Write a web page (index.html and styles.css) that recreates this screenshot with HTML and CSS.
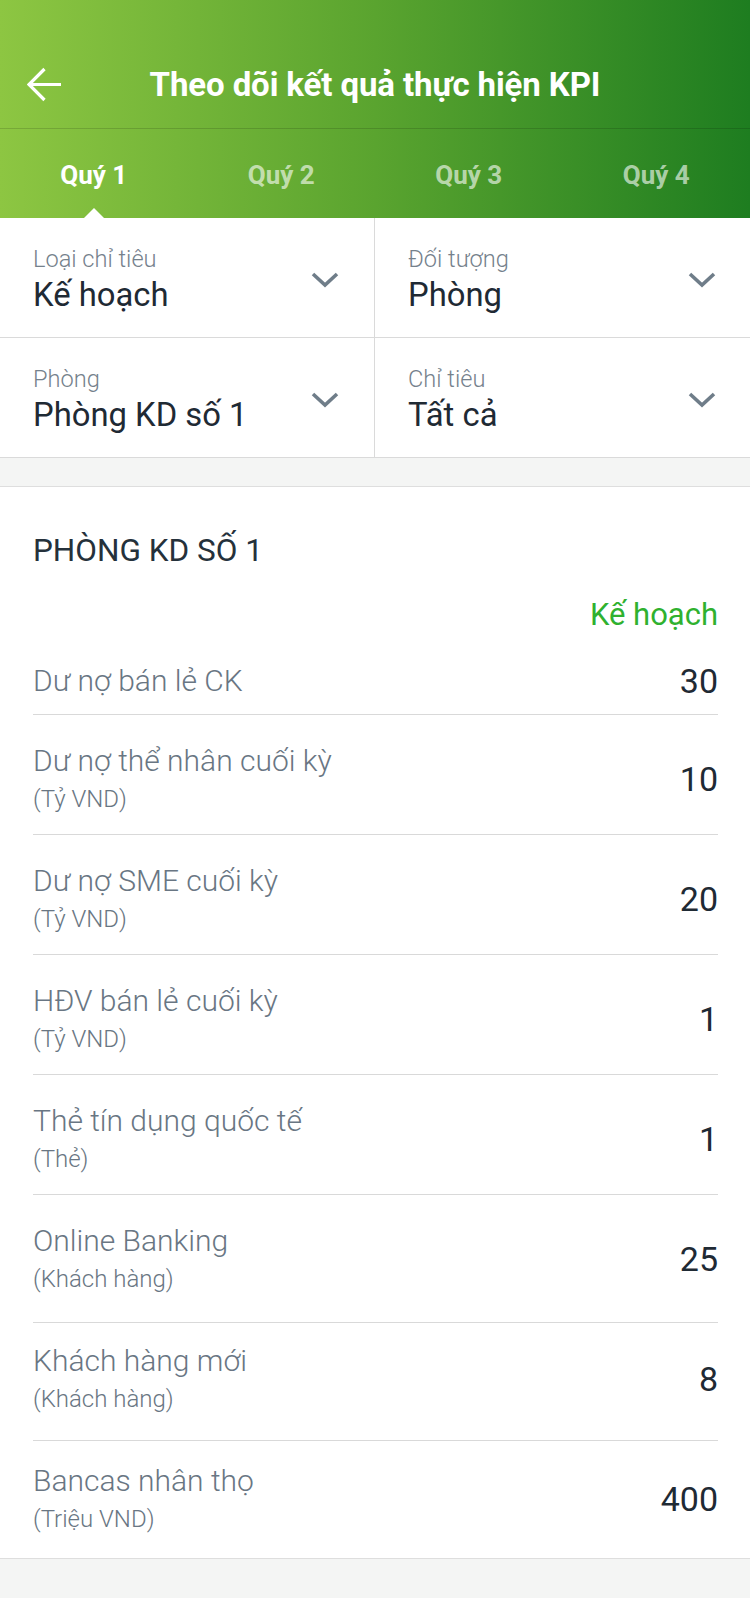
FILE: index.html
```html
<!DOCTYPE html>
<html lang="vi">
<head>
<meta charset="utf-8">
<title>Theo dõi kết quả thực hiện KPI</title>
<link rel="stylesheet" href="styles.css">
</head>
<body>
<div class="screen">
  <header class="header">
    <div class="nav">
      <div class="nav-left">
        <svg class="back" width="36" height="36" viewBox="0 0 36 36" aria-hidden="true">
          <path d="M34 17.5H2.5 M17.5 2 L2 17.5 L17.5 33" fill="none" stroke="#fff" stroke-width="3.2" stroke-linejoin="miter"/>
        </svg>
      </div>
      <h1 class="nav-title">Theo dõi kết quả thực hiện KPI</h1>
      <div class="nav-right"></div>
    </div>
    <nav class="tabs">
      <div class="tab tab--active">Quý 1<span class="tab-caret"></span></div>
      <div class="tab">Quý 2</div>
      <div class="tab">Quý 3</div>
      <div class="tab">Quý 4</div>
    </nav>
  </header>

  <section class="filters">
    <div class="filter">
      <div class="filter-text">
        <div class="filter-label">Loại chỉ tiêu</div>
        <div class="filter-value">Kế hoạch</div>
      </div>
      <svg class="chev" width="28" height="16" viewBox="0 0 28 16" aria-hidden="true"><polyline points="2,2 14,13 26,2" fill="none" stroke="#6f7d89" stroke-width="3.6"/></svg>
    </div>
    <div class="filter filter--right">
      <div class="filter-text">
        <div class="filter-label">Đối tượng</div>
        <div class="filter-value">Phòng</div>
      </div>
      <svg class="chev" width="28" height="16" viewBox="0 0 28 16" aria-hidden="true"><polyline points="2,2 14,13 26,2" fill="none" stroke="#6f7d89" stroke-width="3.6"/></svg>
    </div>
    <div class="filter">
      <div class="filter-text">
        <div class="filter-label">Phòng</div>
        <div class="filter-value">Phòng KD số 1</div>
      </div>
      <svg class="chev" width="28" height="16" viewBox="0 0 28 16" aria-hidden="true"><polyline points="2,2 14,13 26,2" fill="none" stroke="#6f7d89" stroke-width="3.6"/></svg>
    </div>
    <div class="filter filter--right">
      <div class="filter-text">
        <div class="filter-label">Chỉ tiêu</div>
        <div class="filter-value">Tất cả</div>
      </div>
      <svg class="chev" width="28" height="16" viewBox="0 0 28 16" aria-hidden="true"><polyline points="2,2 14,13 26,2" fill="none" stroke="#6f7d89" stroke-width="3.6"/></svg>
    </div>
  </section>

  <div class="gap"></div>

  <section class="card">
    <h2 class="card-title">PHÒNG KD SỐ 1</h2>
    <div class="col-head">Kế hoạch</div>
    <div class="rows">
      <div class="row row--single">
        <div class="row-text"><div class="row-name">Dư nợ bán lẻ CK</div></div>
        <div class="row-value">30</div>
      </div>
      <div class="row">
        <div class="row-text"><div class="row-name">Dư nợ thể nhân cuối kỳ</div><div class="row-unit">(Tỷ VND)</div></div>
        <div class="row-value">10</div>
      </div>
      <div class="row">
        <div class="row-text"><div class="row-name">Dư nợ SME cuối kỳ</div><div class="row-unit">(Tỷ VND)</div></div>
        <div class="row-value">20</div>
      </div>
      <div class="row">
        <div class="row-text"><div class="row-name">HĐV bán lẻ cuối kỳ</div><div class="row-unit">(Tỷ VND)</div></div>
        <div class="row-value">1</div>
      </div>
      <div class="row">
        <div class="row-text"><div class="row-name">Thẻ tín dụng quốc tế</div><div class="row-unit">(Thẻ)</div></div>
        <div class="row-value">1</div>
      </div>
      <div class="row row--tall">
        <div class="row-text"><div class="row-name">Online Banking</div><div class="row-unit">(Khách hàng)</div></div>
        <div class="row-value">25</div>
      </div>
      <div class="row row--raised">
        <div class="row-text"><div class="row-name">Khách hàng mới</div><div class="row-unit">(Khách hàng)</div></div>
        <div class="row-value">8</div>
      </div>
      <div class="row row--last">
        <div class="row-text"><div class="row-name">Bancas nhân thọ</div><div class="row-unit">(Triệu VND)</div></div>
        <div class="row-value">400</div>
      </div>
    </div>
  </section>
</div>
</body>
</html>
```

FILE: styles.css
```css
* { box-sizing: border-box; }

html, body {
  margin: 0;
  padding: 0;
}

body {
  font-family: Roboto, "Noto Sans", "Liberation Sans", sans-serif;
  background: #f4f5f4;
  color: #1f2b35;
  width: 750px;
}

.screen {
  width: 750px;
  min-height: 1598px;
  background: #f4f5f4;
}

/* Header */
.header {
  background: linear-gradient(90deg, #8dc642 0%, #5aa42f 50%, #1e7d20 100%);
  padding-top: 40px;
}

.nav {
  height: 89px;
  display: grid;
  grid-template-columns: 1fr auto 1fr;
  align-items: center;
  border-bottom: 1px solid rgba(0, 0, 0, 0.14);
}

.nav-left {
  padding-left: 27px;
  display: flex;
  align-items: center;
  padding-top: 2px;
}

.back { display: block; }

.nav-title {
  margin: 0;
  color: #fff;
  font-size: 33px;
  font-weight: 700;
  line-height: 44px;
  letter-spacing: -0.1px;
  padding-top: 2px;
}

.tabs {
  display: grid;
  grid-template-columns: repeat(4, 1fr);
  height: 89px;
}

.tab {
  position: relative;
  display: flex;
  align-items: center;
  justify-content: center;
  font-size: 26px;
  font-weight: 700;
  color: rgba(255, 255, 255, 0.62);
  padding-top: 2px;
}

.tab--active { color: #fff; }

.tab-caret {
  position: absolute;
  left: 50%;
  bottom: 0;
  margin-left: -10px;
  width: 0;
  height: 0;
  border-left: 10px solid transparent;
  border-right: 10px solid transparent;
  border-bottom: 10px solid #fff;
}

/* Filters */
.filters {
  display: grid;
  grid-template-columns: 1fr 1fr;
  background: #fff;
}

.filter {
  display: flex;
  align-items: center;
  justify-content: space-between;
  height: 120px;
  padding: 0 35px 0 33px;
  border-bottom: 1px solid #dadada;
  border-right: 1px solid #dadada;
}

.filter--right {
  border-right: none;
  padding-left: 33px;
  padding-right: 34px;
}

.filter-text {
  padding-top: 7px;
}

.filter-label {
  font-size: 23.6px;
  font-weight: 300;
  line-height: 28px;
  color: #75818c;
}

.filter-value {
  font-size: 32.8px;
  font-weight: 400;
  line-height: 45px;
  color: #1f2a34;
}

.chev {
  display: block;
  margin-top: 4px;
}

.gap {
  height: 29px;
  background: #f4f5f4;
  border-bottom: 1px solid #dedede;
}

/* Card */
.card {
  background: #fff;
  padding: 42px 32px 0 33px;
  border-bottom: 1px solid #dedede;
}

.card-title {
  margin: 0;
  font-size: 31.5px;
  font-weight: 400;
  line-height: 44px;
  color: #25313b;
}

.col-head {
  margin-top: 22px;
  text-align: right;
  font-size: 31px;
  font-weight: 400;
  line-height: 40px;
  color: #2fb12f;
}

.row {
  display: flex;
  align-items: center;
  justify-content: space-between;
  padding: 26px 0 17px;
  border-bottom: 1px solid #d9d9d9;
}

.row--single { padding-bottom: 13px; }
.row--tall { padding-bottom: 25px; }
.row--raised { padding-top: 18px; padding-bottom: 23px; }
.row--last { padding-top: 20px; padding-bottom: 21px; border-bottom: none; }

.row-name {
  font-size: 30px;
  font-weight: 300;
  line-height: 40px;
  color: #697683;
}

.row-unit {
  font-size: 24px;
  font-weight: 300;
  line-height: 36px;
  color: #697683;
}

.row-value {
  font-size: 34px;
  font-weight: 400;
  line-height: 40px;
  color: #1f2a34;
}
```
